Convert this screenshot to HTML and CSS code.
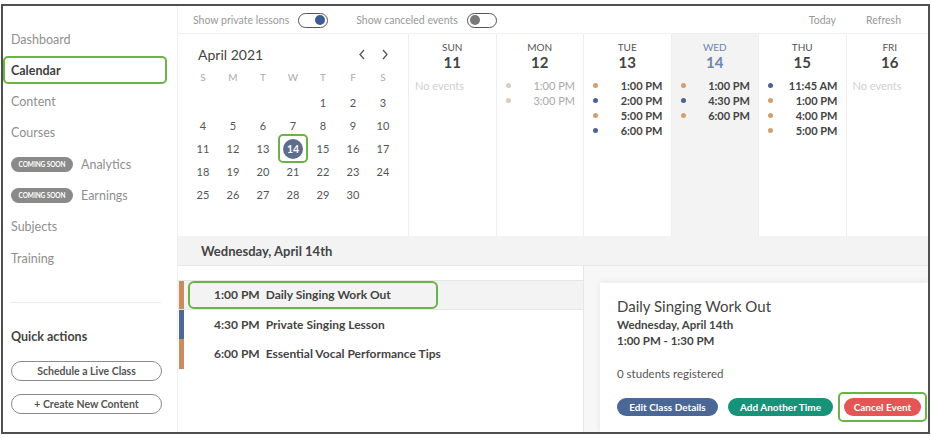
FILE: index.html
```html
<!DOCTYPE html>
<html>
<head>
<meta charset="utf-8">
<link rel="stylesheet" href="styles.css">
</head>
<body>
<div class="frame">
  <aside class="sidebar">
    <nav class="nav">
      <div class="nav-item">Dashboard</div>
      <div class="nav-item active">Calendar</div>
      <div class="nav-item">Content</div>
      <div class="nav-item">Courses</div>
      <div class="nav-item"><span class="badge">COMING SOON</span>Analytics</div>
      <div class="nav-item"><span class="badge">COMING SOON</span>Earnings</div>
      <div class="nav-item">Subjects</div>
      <div class="nav-item">Training</div>
    </nav>
    <div class="divider"></div>
    <div class="quick-title">Quick actions</div>
    <button class="quick-btn">Schedule a Live Class</button>
    <button class="quick-btn">+ Create New Content</button>
  </aside>

  <main class="main">
    <div class="topbar">
      <div class="toggle-group">
        <span class="toggle-label">Show private lessons</span>
        <span class="toggle on"><span class="knob"></span></span>
      </div>
      <div class="toggle-group">
        <span class="toggle-label">Show canceled events</span>
        <span class="toggle off"><span class="knob"></span></span>
      </div>
      <div class="topbar-spacer"></div>
      <span class="top-link">Today</span>
      <span class="top-link">Refresh</span>
    </div>

    <div class="calrow">
      <div class="mini">
        <div class="mini-head">
          <span class="mini-title">April 2021</span>
          <span class="chev">
            <svg width="8" height="11" viewBox="0 0 8 11"><path d="M6 1 L2 5.5 L6 10" fill="none" stroke="#555" stroke-width="1.3"/></svg>
          </span>
          <span class="chev">
            <svg width="8" height="11" viewBox="0 0 8 11"><path d="M2 1 L6 5.5 L2 10" fill="none" stroke="#555" stroke-width="1.3"/></svg>
          </span>
        </div>
        <div class="mini-grid">
          <span class="wd">S</span><span class="wd">M</span><span class="wd">T</span><span class="wd">W</span><span class="wd">T</span><span class="wd">F</span><span class="wd">S</span>
          <span></span><span></span><span></span><span></span><span class="d">1</span><span class="d">2</span><span class="d">3</span>
          <span class="d">4</span><span class="d">5</span><span class="d">6</span><span class="d">7</span><span class="d">8</span><span class="d">9</span><span class="d">10</span>
          <span class="d">11</span><span class="d">12</span><span class="d">13</span><span class="d sel"><span class="sel-ring"><span class="sel-dot">14</span></span></span><span class="d">15</span><span class="d">16</span><span class="d">17</span>
          <span class="d">18</span><span class="d">19</span><span class="d">20</span><span class="d">21</span><span class="d">22</span><span class="d">23</span><span class="d">24</span>
          <span class="d">25</span><span class="d">26</span><span class="d">27</span><span class="d">28</span><span class="d">29</span><span class="d">30</span><span></span>
        </div>
      </div>

      <div class="day">
        <div class="day-name">SUN</div>
        <div class="day-num">11</div>
        <div class="events"><div class="no-events">No events</div></div>
      </div>
      <div class="day past">
        <div class="day-name">MON</div>
        <div class="day-num">12</div>
        <div class="events">
          <div class="ev"><span class="dot o"></span><span class="t">1:00 PM</span></div>
          <div class="ev"><span class="dot o"></span><span class="t">3:00 PM</span></div>
        </div>
      </div>
      <div class="day">
        <div class="day-name">TUE</div>
        <div class="day-num">13</div>
        <div class="events">
          <div class="ev"><span class="dot o"></span><span class="t">1:00 PM</span></div>
          <div class="ev"><span class="dot b"></span><span class="t">2:00 PM</span></div>
          <div class="ev"><span class="dot o"></span><span class="t">5:00 PM</span></div>
          <div class="ev"><span class="dot b"></span><span class="t">6:00 PM</span></div>
        </div>
      </div>
      <div class="day today">
        <div class="day-name">WED</div>
        <div class="day-num">14</div>
        <div class="events">
          <div class="ev"><span class="dot o"></span><span class="t">1:00 PM</span></div>
          <div class="ev"><span class="dot b"></span><span class="t">4:30 PM</span></div>
          <div class="ev"><span class="dot o"></span><span class="t">6:00 PM</span></div>
        </div>
      </div>
      <div class="day">
        <div class="day-name">THU</div>
        <div class="day-num">15</div>
        <div class="events">
          <div class="ev"><span class="dot b"></span><span class="t">11:45 AM</span></div>
          <div class="ev"><span class="dot o"></span><span class="t">1:00 PM</span></div>
          <div class="ev"><span class="dot o"></span><span class="t">4:00 PM</span></div>
          <div class="ev"><span class="dot o"></span><span class="t">5:00 PM</span></div>
        </div>
      </div>
      <div class="day">
        <div class="day-name">FRI</div>
        <div class="day-num">16</div>
        <div class="events"><div class="no-events">No events</div></div>
      </div>
    </div>

    <div class="dayhead">Wednesday, April 14th</div>

    <div class="bottom">
      <div class="list">
        <div class="row selected">
          <span class="bar o"></span>
          <span class="row-inner hl"><span class="rt">1:00 PM</span><span class="rn">Daily Singing Work Out</span></span>
        </div>
        <div class="row">
          <span class="bar b"></span>
          <span class="row-inner"><span class="rt">4:30 PM</span><span class="rn">Private Singing Lesson</span></span>
        </div>
        <div class="row">
          <span class="bar o"></span>
          <span class="row-inner"><span class="rt">6:00 PM</span><span class="rn">Essential Vocal Performance Tips</span></span>
        </div>
      </div>
      <div class="detail">
        <div class="card">
          <div class="card-title">Daily Singing Work Out</div>
          <div class="card-sub">Wednesday, April 14th</div>
          <div class="card-sub">1:00 PM - 1:30 PM</div>
          <div class="card-reg">0 students registered</div>
          <div class="actions">
            <span class="pill blue">Edit Class Details</span>
            <span class="pill teal">Add Another Time</span>
            <span class="pill-wrap"><span class="pill red">Cancel Event</span></span>
          </div>
        </div>
      </div>
    </div>
  </main>
</div>
</body>
</html>
```

FILE: styles.css
```css
* { box-sizing: border-box; }
html, body { margin: 0; padding: 0; background: #fff; }
body {
  font-family: "Lato", "Open Sans", sans-serif;
  color: #444;
  width: 931px;
  height: 438px;
  overflow: hidden;
}
.frame {
  margin: 4px 0 0 1px;
  width: 929px;
  height: 430px;
  border: 2px solid #505050;
  display: flex;
  overflow: hidden;
  background: #fff;
}

/* sidebar */
.sidebar {
  width: 175px;
  flex: none;
  border-right: 1px solid #f0f0f0;
  padding-top: 19px;
}
.nav-item {
  width: 164px;
  height: 28px;
  margin-bottom: 3.3px;
  border: 2px solid transparent;
  border-radius: 5px;
  padding-left: 6px;
  display: flex;
  align-items: center;
  font-size: 12.5px;
  color: #8f8f8f;
}
.nav-item.active {
  border-color: #6ab446;
  color: #3e3e3e;
  font-weight: 700;
}
.badge {
  display: inline-flex;
  align-items: center;
  justify-content: center;
  width: 62px;
  height: 15px;
  border-radius: 8px;
  background: #8a8a8a;
  color: #fff;
  font-size: 6.5px;
  font-weight: 700;
  margin-right: 8px;
  letter-spacing: -0.1px;
}
.divider {
  margin: 30px 0 0 8px;
  width: 150px;
  height: 1px;
  background: #ececec;
}
.quick-title {
  margin: 26px 0 0 8px;
  font-size: 12.5px;
  font-weight: 700;
  color: #444;
  line-height: 16px;
}
.quick-btn {
  display: block;
  margin: 16px 0 0 8px;
  width: 151px;
  height: 20px;
  border: 1px solid #8a8a8a;
  border-radius: 10px;
  background: #fff;
  font-family: inherit;
  font-size: 10.5px;
  font-weight: 700;
  color: #555;
  padding: 0;
}
.quick-btn + .quick-btn { margin-top: 13px; }

/* main */
.main {
  flex: 1;
  display: flex;
  flex-direction: column;
  min-width: 0;
}
.topbar {
  height: 28px;
  flex: none;
  border-bottom: 1px solid #f0f0f0;
  display: flex;
  align-items: center;
  padding-left: 15px;
  padding-right: 27px;
  padding-top: 1px;
  font-size: 10.5px;
  color: #999;
}
.toggle-group {
  display: flex;
  align-items: center;
  margin-right: 28px;
}
.toggle-label { margin-right: 9px; }
.toggle {
  width: 30px;
  height: 15px;
  border: 1.2px solid #555;
  border-radius: 8px;
  display: flex;
  align-items: center;
  padding: 0 2px;
}
.toggle.on { justify-content: flex-end; }
.knob {
  width: 10px;
  height: 10px;
  border-radius: 50%;
  background: #3d5c96;
}
.toggle.off .knob { background: #7a7a7a; }
.topbar-spacer { flex: 1; }
.top-link { margin-left: 30px; color: #999; }

.calrow {
  height: 202px;
  flex: none;
  display: flex;
}
.mini {
  width: 230px;
  flex: none;
  padding: 9px 0 0 10px;
}
.mini-head {
  display: flex;
  align-items: center;
  height: 22px;
  padding-left: 10px;
}
.mini-title {
  font-size: 14px;
  color: #444;
  flex: 1;
}
.chev {
  width: 23px;
  display: flex;
  justify-content: center;
}
.chev:last-child { margin-right: 12px; }
.mini-grid {
  margin-top: 3px;
  display: grid;
  grid-template-columns: repeat(7, 30px);
  grid-auto-rows: 23px;
}
.mini-grid > span {
  display: flex;
  align-items: center;
  justify-content: center;
  font-size: 11px;
  color: #555;
}
.mini-grid .wd { color: #aaa; font-size: 10px; height: 18px; }
.sel-ring {
  width: 30px;
  height: 29px;
  border: 2px solid #6ab446;
  border-radius: 5px;
  display: flex;
  align-items: center;
  justify-content: center;
}
.sel-dot {
  width: 20px;
  height: 20px;
  border-radius: 50%;
  background: #5e6d8e;
  color: #fff;
  font-weight: 700;
  font-size: 10.5px;
  display: flex;
  align-items: center;
  justify-content: center;
}

.day {
  width: 87.5px;
  flex: none;
  border-left: 1px solid #eeeeee;
  padding-top: 7px;
  text-align: center;
}
.day.today { background: #f3f3f3; }
.day-name {
  font-size: 10px;
  line-height: 12px;
  color: #555;
}
.day.today .day-name { color: #6f86ad; }
.day-num {
  font-size: 15px;
  line-height: 18px;
  font-weight: 700;
  color: #444;
}
.day.today .day-num { color: #6f86ad; }
.events { margin-top: 7px; }
.ev {
  height: 15px;
  display: flex;
  align-items: center;
  padding: 0 8px 0 9px;
}
.t {
  flex: 1;
  text-align: right;
  font-size: 11px;
  font-weight: 700;
  color: #444;
}
.dot {
  width: 5px;
  height: 5px;
  border-radius: 50%;
  flex: none;
}
.dot.o { background: #d1a071; }
.dot.b { background: #4d6491; }
.past .t { color: #a8a8a8; font-weight: 400; }
.past .dot.o { background: #ddcbbb; }
.no-events {
  font-size: 11px;
  color: #d0d0d0;
  text-align: left;
  padding-left: 6px;
  line-height: 15px;
}

.dayhead {
  height: 30px;
  flex: none;
  background: #f3f3f3;
  border-bottom: 1px solid #e8e8e8;
  display: flex;
  align-items: center;
  padding-left: 23px;
  font-size: 13px;
  font-weight: 700;
  color: #444;
}

.bottom {
  flex: 1;
  display: flex;
  min-height: 0;
}
.list {
  width: 405px;
  flex: none;
  padding-top: 14px;
}
.row {
  height: 29.5px;
  display: flex;
  align-items: stretch;
}
.row.selected {
  background: #f3f3f3;
  border-top: 1px solid #e6e6e6;
  border-bottom: 1px solid #e6e6e6;
}
.bar {
  width: 5px;
  margin-left: 1px;
  flex: none;
}
.bar.o { background: #c98d5c; }
.bar.b { background: #4b6896; }
.row-inner {
  margin-left: 4px;
  width: 250px;
  border: 2px solid transparent;
  border-radius: 6px;
  padding-left: 24px;
  display: flex;
  align-items: center;
  font-size: 12px;
  font-weight: 700;
  color: #444;
  white-space: nowrap;
}
.row-inner.hl { border-color: #6ab446; }
.rt { margin-right: 6px; }

.detail {
  flex: 1;
  background: #f7f7f7;
  border-left: 1px solid #e6e6e6;
  padding: 17px 0 0 16px;
}
.card {
  background: #fff;
  height: 100%;
  box-shadow: 0 0 6px rgba(0,0,0,0.08);
  padding: 13px 0 0 17px;
}
.card-title {
  font-size: 15px;
  line-height: 20px;
  color: #444;
  margin-bottom: 1px;
}
.card-sub {
  font-size: 11.5px;
  font-weight: 700;
  line-height: 16px;
  color: #444;
}
.card-reg {
  margin-top: 17px;
  font-size: 11.5px;
  line-height: 16px;
  color: #555;
}
.actions {
  margin-top: 10px;
  display: flex;
  align-items: center;
}
.pill {
  height: 18px;
  border-radius: 9px;
  display: inline-flex;
  align-items: center;
  justify-content: center;
  color: #fff;
  font-size: 10px;
  font-weight: 700;
  white-space: nowrap;
}
.pill.blue { background: #4a6795; width: 101px; margin-right: 10px; }
.pill.teal { background: #17937a; width: 105px; margin-right: 5px; }
.pill.red { background: #e65455; width: 77px; }
.pill-wrap {
  border: 2px solid #6ab446;
  border-radius: 5px;
  padding: 4px;
  display: inline-flex;
}
```
